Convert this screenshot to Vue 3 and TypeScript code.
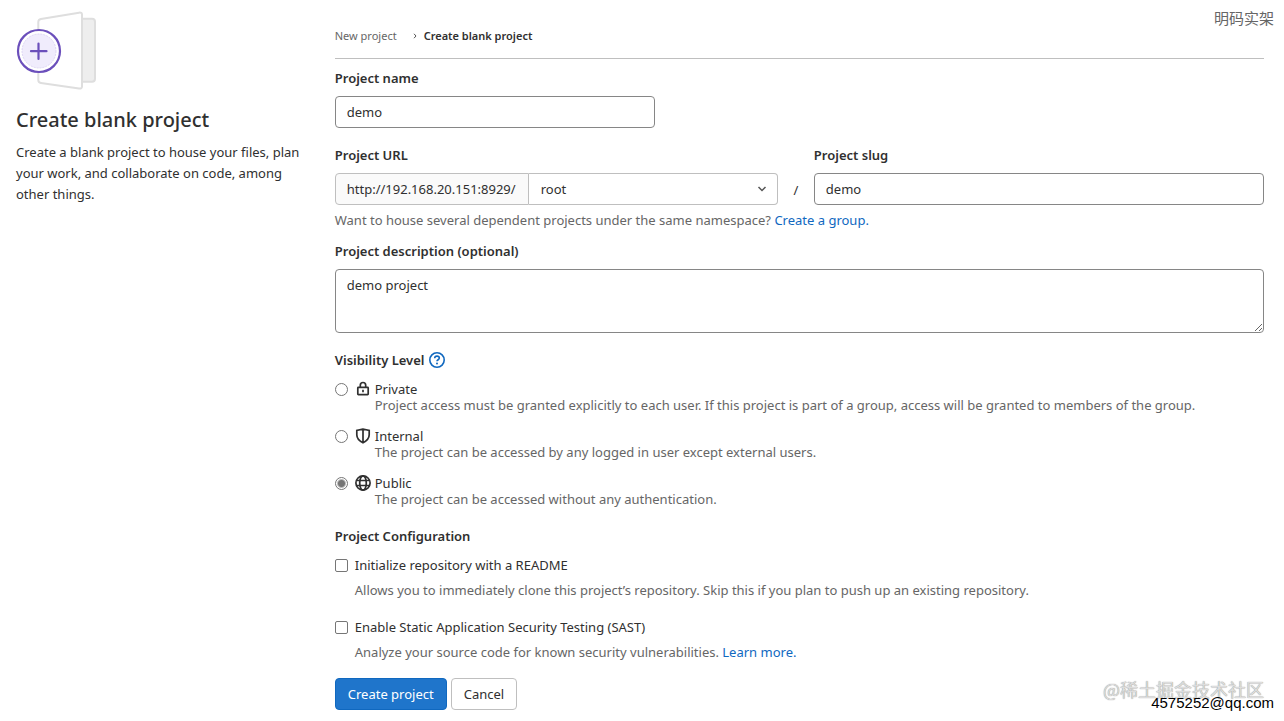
<script setup lang="ts">
import { ref } from 'vue'

interface Level {
  id: string
  label: string
  help: string
}

const levels: Level[] = [
  {
    id: 'private',
    label: 'Private',
    help: 'Project access must be granted explicitly to each user. If this project is part of a group, access will be granted to members of the group.',
  },
  {
    id: 'internal',
    label: 'Internal',
    help: 'The project can be accessed by any logged in user except external users.',
  },
  {
    id: 'public',
    label: 'Public',
    help: 'The project can be accessed without any authentication.',
  },
]

const name = ref('demo')
const slug = ref('demo')
const namespace = ref('root')
const description = ref('demo project')
const visibility = ref('public')
const readme = ref(false)
const sast = ref(false)
</script>

<template>
  <div class="page">
    <aside class="intro">
      <svg class="art" width="82" height="82" viewBox="0 0 82 82" fill="none" aria-hidden="true">
        <rect x="60" y="8.700" width="19" height="63" rx="3" fill="#eee" stroke="#dedede" stroke-width="2" />
        <path d="M22.300 12q0-2.600 2.600-3L63 2.700q3-.5 3 2v71.800q0 2.500-3 2L24.900 73q-2.600-.4-2.600-3z" fill="#fff" stroke="#dedede" stroke-width="2" />
        <circle cx="23" cy="41" r="21" fill="#fff" stroke="#6b4fbb" stroke-width="2.200" />
        <circle cx="23" cy="41" r="17" fill="#f0ecfc" stroke="#d6cdf0" stroke-width=".8" stroke-dasharray="2 1" />
        <path d="M22.500 33.500v15.500M15 41.200h15.500" stroke="#6b4fbb" stroke-width="2.200" stroke-linecap="round" />
      </svg>
      <h1>Create blank project</h1>
      <p>Create a blank project to house your files, plan your work, and collaborate on code, among other things.</p>
    </aside>

    <main class="content">
      <nav class="crumbs" aria-label="Breadcrumb">
        <a href="#new">New project</a>
        <svg width="4" height="6" viewBox="0 0 4 6" fill="none" aria-hidden="true">
          <path d="m1 .8 2 2.200-2 2.200" stroke="#555" />
        </svg>
        <a href="#blank" class="current" aria-current="page">Create blank project</a>
      </nav>

      <form @submit.prevent>
        <div class="field name">
          <label for="name">Project name</label>
          <input id="name" v-model="name" class="box" type="text" />
        </div>

        <div class="path">
          <div class="field">
            <label for="namespace">Project URL</label>
            <div class="group">
              <span class="prefix">http://192.168.20.151:8929/</span>
              <div class="picker">
                <select id="namespace" v-model="namespace">
                  <option value="root">root</option>
                </select>
                <svg width="10" height="6" viewBox="0 0 10 6" fill="none" aria-hidden="true">
                  <path d="m1.500 1 3.500 3.500L8.500 1" stroke="#555" stroke-width="1.500" />
                </svg>
              </div>
            </div>
          </div>
          <span class="slash">/</span>
          <div class="field">
            <label for="slug">Project slug</label>
            <input id="slug" v-model="slug" class="box" type="text" />
          </div>
        </div>
        <p class="hint">Want to house several dependent projects under the same namespace? <a href="#group">Create a group.</a></p>

        <div class="field description">
          <label for="description">Project description (optional)</label>
          <textarea id="description" v-model="description" class="box"></textarea>
        </div>

        <fieldset class="levels">
          <legend>
            Visibility Level
            <a href="#help" aria-label="Help">
              <svg width="16" height="16" viewBox="0 0 16 16" fill="none" aria-hidden="true">
                <circle cx="8" cy="8" r="7.200" stroke="#1068bf" stroke-width="1.600" />
                <path d="M5.700 6.300C5.700 4.900 6.700 4.100 8 4.100s2.300.8 2.300 2c0 1.700-2.300 1.600-2.300 3.200" stroke="#1068bf" stroke-width="1.600" />
                <circle cx="8" cy="11.600" r="1" fill="#1068bf" />
              </svg>
            </a>
          </legend>
          <div v-for="level in levels" :key="level.id" class="level">
            <input :id="level.id" v-model="visibility" type="radio" name="visibility" :value="level.id" />
            <label :for="level.id">
              <svg width="16" height="16" viewBox="0 0 16 16" fill="none" stroke="#303030" stroke-width="1.700" aria-hidden="true">
                <template v-if="level.id === 'private'">
                  <rect x="2.800" y="6.300" width="10.400" height="7.400" rx=".6" />
                  <path d="M5.300 6V4.200a2.700 2.700 0 0 1 5.400 0V6M8 8.700v2.600" />
                </template>
                <path v-else-if="level.id === 'internal'" d="M8 1 1.800 2.500v4.300c0 3.500 2.200 6 6.200 8 4-2 6.200-4.500 6.200-8V2.500zM8 1v13.500" />
                <template v-else>
                  <circle cx="8" cy="8" r="7.100" />
                  <ellipse cx="8" cy="8" rx="3.300" ry="7.100" />
                  <path d="M1.500 5.500h13M1.500 10.500h13" />
                </template>
              </svg>
              <span>{{ level.label }}</span>
            </label>
            <p>{{ level.help }}</p>
          </div>
        </fieldset>

        <fieldset class="config">
          <legend>Project Configuration</legend>
          <div class="option">
            <input id="readme" v-model="readme" type="checkbox" />
            <label for="readme">Initialize repository with a README</label>
            <p>Allows you to immediately clone this project’s repository. Skip this if you plan to push up an existing repository.</p>
          </div>
          <div class="option">
            <input id="sast" v-model="sast" type="checkbox" />
            <label for="sast">Enable Static Application Security Testing (SAST)</label>
            <p>Analyze your source code for known security vulnerabilities. <a href="#learn">Learn more.</a></p>
          </div>
        </fieldset>

        <div class="actions">
          <button type="submit" class="primary">Create project</button>
          <button type="button">Cancel</button>
        </div>
      </form>
    </main>

    <span class="mark author">明码实架</span>
    <span class="mark community">@稀土掘金技术社区</span>
    <span class="mark mail">4575252@qq.com</span>
  </div>
</template>

<style>
body {
  margin: 0;
  background: #fff;
}
</style>

<style scoped>
.page {
  position: relative;
  display: grid;
  grid-template-columns: 1fr 3fr;
  padding-right: 5px;
  min-height: 100vh;
  box-sizing: border-box;
  color: #303030;
  font: 13px/20px "Noto Sans", "Open Sans", sans-serif;
}
.page * {
  box-sizing: border-box;
}
p,
h1 {
  margin: 0;
}
a {
  color: #1068bf;
  text-decoration: none;
}
.intro {
  padding: 10px 12px 10px 16px;
}
.art {
  display: block;
}
h1 {
  margin-top: 16px;
  font-size: 20px;
  line-height: 24px;
  font-weight: 500;
}
.intro p {
  margin-top: 10px;
  line-height: 21px;
}
.content {
  min-width: 0;
  padding: 13px 15px 0;
}
.crumbs {
  display: flex;
  align-items: center;
  height: 46px;
  border-bottom: 1px solid #bfbfbf;
  font-size: 11px;
}
.crumbs a {
  color: #666;
}
.crumbs svg {
  margin: 0 7px 0 16px;
}
.crumbs .current {
  color: #303030;
  font-weight: 600;
}
.field {
  display: flex;
  flex-direction: column;
  min-width: 0;
}
.field label,
legend {
  font-weight: 600;
}
.field label {
  margin-bottom: 8px;
}
.box,
select {
  width: 100%;
  height: 32px;
  margin: 0;
  padding: 0 11px;
  border: 1px solid #868686;
  border-radius: 4px;
  background: #fff;
  color: #303030;
  font: inherit;
}
.name {
  margin-top: 9px;
}
.name .box {
  max-width: 320px;
}
.path {
  display: grid;
  grid-template-columns: 443fr 36px 450fr;
  margin-top: 17px;
}
.group {
  display: flex;
}
.prefix {
  width: 194px;
  flex: none;
  height: 32px;
  padding: 0 11px;
  border: 1px solid #bfbfbf;
  border-radius: 4px 0 0 4px;
  background: #fafafa;
  line-height: 30px;
  white-space: nowrap;
}
.picker {
  display: grid;
  flex: 1;
  align-items: center;
}
.picker select,
.picker svg {
  grid-area: 1 / 1;
}
.picker svg {
  justify-self: end;
  margin-right: 11px;
  pointer-events: none;
}
select {
  appearance: none;
  padding-left: 12px;
  border-color: #bfbfbf;
  border-left: 0;
  border-radius: 0 4px 4px 0;
}
.slash {
  align-self: end;
  padding-bottom: 5px;
  text-align: center;
}
.hint {
  margin-top: 5px;
  color: #666;
}
.description {
  margin-top: 11px;
}
.description .box {
  height: 64px;
  padding: 5px 11px;
  resize: vertical;
}
fieldset {
  margin: 0;
  padding: 0;
  border: 0;
}
legend {
  padding: 0;
}
.levels {
  margin-top: 17px;
}
.levels legend {
  display: flex;
  align-items: center;
  gap: 4px;
  margin-bottom: 11px;
}
.levels legend svg {
  display: block;
}
.level,
.option {
  display: grid;
  grid-template-columns: 20px 1fr;
}
.level {
  margin-bottom: 15px;
  line-height: 16px;
}
.level label {
  display: flex;
  gap: 4px;
}
.level p {
  grid-column: 2;
  padding-left: 20px;
}
.level p,
.option p {
  color: #666;
}
input[type="radio"],
input[type="checkbox"] {
  align-self: center;
  width: 13px;
  height: 13px;
  margin: 0;
  appearance: none;
  border: 1px solid #767676;
  background: #fff;
}
input[type="radio"] {
  border-radius: 50%;
}
input[type="radio"]:checked {
  background: radial-gradient(circle, #767676 3px, #fff 5px);
}
input[type="checkbox"] {
  border-radius: 2px;
}
.config {
  margin-top: 4px;
}
.config legend {
  margin-bottom: 9px;
}
.option {
  margin-bottom: 17px;
}
.option p {
  grid-column: 2;
  margin-top: 5px;
}
.actions {
  display: flex;
  gap: 4px;
  margin-top: -1px;
}
button {
  height: 32px;
  padding: 0 12px;
  border: 1px solid #bfbfbf;
  border-radius: 4px;
  background: #fff;
  color: #303030;
  font: inherit;
}
.primary {
  border-color: #1068bf;
  background: #1f75cb;
  color: #fff;
}
.mark {
  position: absolute;
  white-space: nowrap;
  pointer-events: none;
}
.author {
  top: 8px;
  right: 10px;
  color: #666;
  font: 15px/20px "Noto Sans CJK SC", sans-serif;
}
.community {
  right: 20px;
  bottom: 21px;
  color: #ddd;
  font: 18px/22px "Noto Sans CJK SC", sans-serif;
  text-shadow: 0 0 1px #777;
}
.mail {
  right: 10px;
  bottom: 8px;
  color: #000;
  font: 15px/20px "Liberation Sans", Arial, sans-serif;
}
</style>
